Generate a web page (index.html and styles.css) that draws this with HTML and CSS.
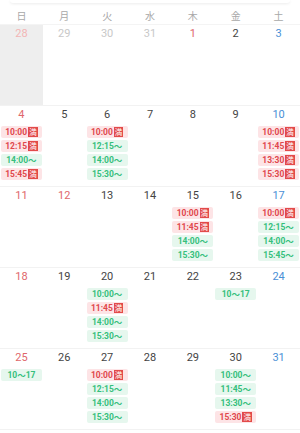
FILE: index.html
```html
<!DOCTYPE html>
<html lang="ja">
<head>
<meta charset="utf-8">
<link rel="stylesheet" href="styles.css">
</head>
<body>
<div class="peek"></div>
<div class="head">
  <div>日</div><div>月</div><div>火</div><div>水</div><div>木</div><div>金</div><div>土</div>
</div>

<div class="week">
  <div class="cell past"><div class="num sun faded">28</div></div>
  <div class="cell"><div class="num gray">29</div></div>
  <div class="cell"><div class="num gray">30</div></div>
  <div class="cell"><div class="num gray">31</div></div>
  <div class="cell"><div class="num sun">1</div></div>
  <div class="cell"><div class="num">2</div></div>
  <div class="cell"><div class="num sat">3</div></div>
</div>

<div class="week">
  <div class="cell"><div class="num sun">4</div>
    <div class="ev full">10:00<span class="b">満</span></div>
    <div class="ev full">12:15<span class="b">満</span></div>
    <div class="ev open">14:00〜</div>
    <div class="ev full">15:45<span class="b">満</span></div>
  </div>
  <div class="cell"><div class="num">5</div></div>
  <div class="cell"><div class="num">6</div>
    <div class="ev full">10:00<span class="b">満</span></div>
    <div class="ev open">12:15〜</div>
    <div class="ev open">14:00〜</div>
    <div class="ev open">15:30〜</div>
  </div>
  <div class="cell"><div class="num">7</div></div>
  <div class="cell"><div class="num">8</div></div>
  <div class="cell"><div class="num">9</div></div>
  <div class="cell"><div class="num sat">10</div>
    <div class="ev full">10:00<span class="b">満</span></div>
    <div class="ev full">11:45<span class="b">満</span></div>
    <div class="ev full">13:30<span class="b">満</span></div>
    <div class="ev full">15:30<span class="b">満</span></div>
  </div>
</div>

<div class="week">
  <div class="cell"><div class="num sun">11</div></div>
  <div class="cell"><div class="num sun">12</div></div>
  <div class="cell"><div class="num">13</div></div>
  <div class="cell"><div class="num">14</div></div>
  <div class="cell"><div class="num">15</div>
    <div class="ev full">10:00<span class="b">満</span></div>
    <div class="ev full">11:45<span class="b">満</span></div>
    <div class="ev open">14:00〜</div>
    <div class="ev open">15:30〜</div>
  </div>
  <div class="cell"><div class="num">16</div></div>
  <div class="cell"><div class="num sat">17</div>
    <div class="ev full">10:00<span class="b">満</span></div>
    <div class="ev open">12:15〜</div>
    <div class="ev open">14:00〜</div>
    <div class="ev open">15:45〜</div>
  </div>
</div>

<div class="week">
  <div class="cell"><div class="num sun">18</div></div>
  <div class="cell"><div class="num">19</div></div>
  <div class="cell"><div class="num">20</div>
    <div class="ev open">10:00〜</div>
    <div class="ev full">11:45<span class="b">満</span></div>
    <div class="ev open">14:00〜</div>
    <div class="ev open">15:30〜</div>
  </div>
  <div class="cell"><div class="num">21</div></div>
  <div class="cell"><div class="num">22</div></div>
  <div class="cell"><div class="num">23</div>
    <div class="ev open">10〜17</div>
  </div>
  <div class="cell"><div class="num sat">24</div></div>
</div>

<div class="week">
  <div class="cell"><div class="num sun">25</div>
    <div class="ev open">10〜17</div>
  </div>
  <div class="cell"><div class="num">26</div></div>
  <div class="cell"><div class="num">27</div>
    <div class="ev full">10:00<span class="b">満</span></div>
    <div class="ev open">12:15〜</div>
    <div class="ev open">14:00〜</div>
    <div class="ev open">15:30〜</div>
  </div>
  <div class="cell"><div class="num">28</div></div>
  <div class="cell"><div class="num">29</div></div>
  <div class="cell"><div class="num">30</div>
    <div class="ev open">10:00〜</div>
    <div class="ev open">11:45〜</div>
    <div class="ev open">13:30〜</div>
    <div class="ev full">15:30<span class="b">満</span></div>
  </div>
  <div class="cell"><div class="num sat">31</div></div>
</div>
</body>
</html>
```

FILE: styles.css
```css
html, body {
  margin: 0;
  padding: 0;
  background: #fff;
}
body {
  width: 300px;
  overflow: hidden;
  font-family: Roboto, "Noto Sans CJK JP", sans-serif;
  color: #444;
  -webkit-font-smoothing: antialiased;
}
.peek {
  height: 3px;
  margin: 0 10px;
  background: #fff;
  border-radius: 0 0 10px 10px;
  box-shadow: 0 1px 3px rgba(0, 0, 0, 0.08);
}
.head {
  display: grid;
  grid-template-columns: repeat(7, 1fr);
  height: 17px;
  padding-top: 4px;
  align-items: center;
  text-align: center;
  font-family: "Noto Sans CJK JP", sans-serif;
  font-size: 10px;
  color: #a8a8a8;
  border-bottom: 1px solid #f4f4f4;
}
.week {
  display: grid;
  grid-template-columns: repeat(7, 1fr);
  height: 80px;
  border-bottom: 1px solid #f2f2f2;
}
.cell {
  display: flex;
  flex-direction: column;
  gap: 1.5px;
  padding: 0 1px;
  min-width: 0;
}
.cell.past {
  background: #eeeeee;
}
.num {
  height: 18px;
  line-height: 18px;
  text-align: center;
  font-size: 11px;
  color: #444;
}
.num.sun { color: #e0676b; }
.num.sat { color: #4a8fd6; }
.num.gray { color: #c8c8c8; }
.num.faded { color: #f3b5b5; }
.ev {
  height: 12.5px;
  display: flex;
  align-items: center;
  justify-content: center;
  border-radius: 2px;
  font-size: 8.5px;
  font-weight: 700;
  line-height: 1;
  white-space: nowrap;
}
.ev.full {
  background: #fde4e6;
  color: #e0474c;
}
.ev.open {
  background: #e6f7ee;
  color: #35bf7c;
}
.b {
  display: inline-flex;
  align-items: center;
  justify-content: center;
  width: 9.5px;
  height: 9.5px;
  margin-left: 1px;
  background: #e24a4a;
  color: #fff;
  font-family: "Noto Sans CJK JP", sans-serif;
  font-size: 7.5px;
  font-weight: 400;
}
```
